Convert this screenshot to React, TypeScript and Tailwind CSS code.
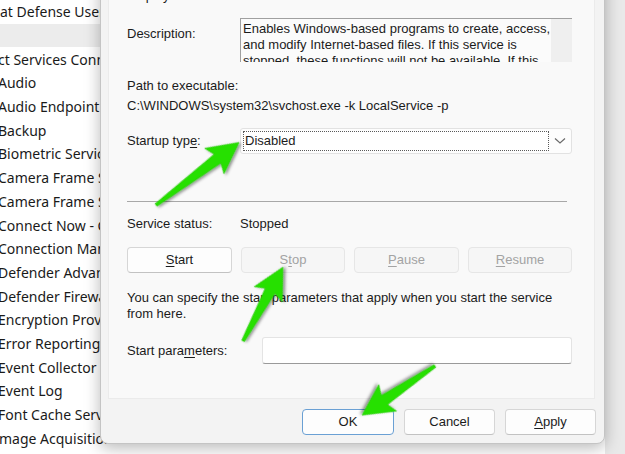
import React from "react";

const services = [
  { name: "at Defense User Service", shift: "" },
  { name: "", shift: "" },
  { name: "ct Services Connection Manager", shift: "-ml-[2px]" },
  { name: "Audio", shift: "-ml-[2px]" },
  { name: "Audio Endpoint Builder", shift: "-ml-[2px]" },
  { name: "Backup", shift: "-ml-[2px]" },
  { name: "Biometric Service", shift: "-ml-[2px]" },
  { name: "Camera Frame Server", shift: "-ml-[2px]" },
  { name: "Camera Frame Server Monitor", shift: "-ml-[2px]" },
  { name: "Connect Now - Config Registrar", shift: "-ml-[2px]" },
  { name: "Connection Manager", shift: "-ml-[2px]" },
  { name: "Defender Advanced Threat Protection", shift: "-ml-[2px]" },
  { name: "Defender Firewall", shift: "-ml-[2px]" },
  { name: "Encryption Provider Host Service", shift: "-ml-[2px]" },
  { name: "Error Reporting Service", shift: "-ml-[2px]" },
  { name: "Event Collector", shift: "-ml-[2px]" },
  { name: "Event Log", shift: "-ml-[2px]" },
  { name: "Font Cache Service", shift: "-ml-[2px]" },
  { name: "mage Acquisition", shift: "-ml-[1px]" },
];

// green callout arrow, drawn along the x axis then rotated into place
const Arrow = ({ x, y, len, angle }: { x: number; y: number; len: number; angle: number }) => {
  const H = 27;
  const hw = 16;
  const t0 = 1.5;
  const t1 = 5.5;
  const pts = [
    [0, -t0],
    [len - H, -t1],
    [len - H - 4, -hw],
    [len, 0],
    [len - H - 4, hw],
    [len - H, t1],
    [0, t0],
  ]
    .map((p) => p.join(","))
    .join(" ");
  return (
    <g transform={`translate(${x} ${y}) rotate(${angle})`} filter="url(#arrowShadow)">
      <polygon points={pts} fill="#27e000" stroke="#1fc400" strokeWidth="0.5" strokeLinejoin="round" />
    </g>
  );
};

const WinButton = ({
  children,
  disabled,
  primary,
  className = "",
}: {
  children: React.ReactNode;
  disabled?: boolean;
  primary?: boolean;
  className?: string;
}) => (
  <div
    className={`h-[26px] flex items-center justify-center rounded-[4px] border text-[13px] ${
      disabled
        ? "bg-[#f6f6f6] border-[#e6e6e6] text-[#a3a3a3]"
        : primary
        ? "bg-[#fdfdfd] border-[#6aa0d4] text-[#1b1b1b]"
        : "bg-[#fdfdfd] border-[#d6d6d6] border-b-[#c2c2c2] text-[#1b1b1b]"
    } ${className}`}
  >
    {children}
  </div>
);

export default function App() {
  return (
    <div className="relative w-[625px] h-[454px] overflow-hidden bg-white flex">
      {/* services list behind the dialog */}
      <div className="flex-1 flex flex-col font-['Noto_Sans',sans-serif] text-[14px] text-[#1a1a1a]">
        {services.map((s, i) => (
          <div
            key={i}
            className={`h-[23.7px] flex items-center whitespace-nowrap overflow-hidden ${
              i === 1 ? "bg-[#ececec]" : ""
            }`}
          >
            <span className={s.shift}>{s.name}</span>
          </div>
        ))}
      </div>
      <div className="w-[20px] bg-[#e9e9e9]" />

      {/* properties dialog */}
      <div className="absolute left-[100px] top-[-30px] w-[505px] h-[474px] bg-[#f3f3f3] border border-[#c4c4c4] rounded-b-[8px] shadow-[0_4px_16px_rgba(0,0,0,0.28)] flex flex-col font-['Liberation_Sans',Arial,sans-serif] text-[13px] text-[#1b1b1b]">
        <div className="ml-[7px] mr-[9px] h-[428px] bg-[#f9f9f9] border-x border-b border-[#ebebeb] flex flex-col pl-[18px] pr-[22px]">
          <div className="mt-[17px] h-[16px] leading-[16px]">Display name:</div>

          <div className="mt-[14px] flex h-[44px]">
            <div className="w-[113px] mt-[8px] leading-[16px]">Description:</div>
            <div className="flex-1 flex border-t border-l border-[#a0a0a0] bg-[#fbfbfb] overflow-hidden">
              <div className="flex-1 pl-[2px] pt-[2px] leading-[16px] whitespace-nowrap overflow-hidden">
                <div>Enables Windows-based programs to create, access,</div>
                <div>and modify Internet-based files. If this service is</div>
                <div>stopped, these functions will not be available. If this</div>
              </div>
              <div className="w-[21px] bg-[#efefef]" />
            </div>
          </div>

          <div className="mt-[16px] h-[16px] leading-[16px]">Path to executable:</div>
          <div className="mt-[4px] h-[16px] leading-[16px]">C:\WINDOWS\system32\svchost.exe -k LocalService -p</div>

          <div className="mt-[14px] flex items-center h-[26px]">
            <div className="w-[113px]">
              Startup typ<u className="underline-offset-2">e</u>:
            </div>
            <div className="flex-1 h-[26px] flex items-center bg-[#fdfdfd] border border-[#e2e2e2] rounded-[3px] pl-[2px]">
              <div className="w-[306px] h-[20px] flex items-center pl-[1px] border border-dotted border-[#5a5a5a] bg-white">
                Disabled
              </div>
              <div className="flex-1 flex justify-center">
                <svg width="12" height="8" viewBox="0 0 12 8">
                  <path d="M1 1.5 L6 6 L11 1.5" fill="none" stroke="#6a6a6a" strokeWidth="1.2" />
                </svg>
              </div>
            </div>
          </div>

          <div className="mt-[47px] h-px bg-[#a8a8a8] mr-[5px]" />

          <div className="mt-[14px] flex h-[16px] leading-[16px]">
            <div className="w-[113px]">Service status:</div>
            <div>Stopped</div>
          </div>

          <div className="mt-[15px] flex justify-between">
            <WinButton className="w-[105px]">
              <u className="underline-offset-2">S</u>tart
            </WinButton>
            <WinButton disabled className="w-[104px]">
              S<u className="underline-offset-2">t</u>op
            </WinButton>
            <WinButton disabled className="w-[105px]">
              <u className="underline-offset-2">P</u>ause
            </WinButton>
            <WinButton disabled className="w-[104px]">
              <u className="underline-offset-2">R</u>esume
            </WinButton>
          </div>

          <div className="mt-[17px] leading-[16px] whitespace-nowrap">
            You can specify the start parameters that apply when you start the service
            <br />
            from here.
          </div>

          <div className="mt-[15px] flex items-center h-[27px]">
            <div className="w-[135px]">
              Start para<u className="underline-offset-2">m</u>eters:
            </div>
            <div className="flex-1 h-[27px] bg-white border border-[#e4e4e4] border-b-[#9a9a9a] rounded-[3px]" />
          </div>
        </div>

        <div className="flex-1 flex justify-end items-start gap-[10px] pt-[10px] pr-[8px]">
          <WinButton primary className="w-[92px]">
            OK
          </WinButton>
          <WinButton className="w-[91px]">Cancel</WinButton>
          <WinButton className="w-[91px]">
            <u className="underline-offset-2">A</u>pply
          </WinButton>
        </div>
      </div>

      {/* green callout arrows */}
      <svg className="absolute inset-0 pointer-events-none" width="625" height="454">
        <defs>
          <filter id="arrowShadow" x="-30%" y="-30%" width="160%" height="160%">
            <feDropShadow dx="1" dy="2" stdDeviation="1.5" floodColor="#000" floodOpacity="0.45" />
          </filter>
        </defs>
        <Arrow x={156} y={205} len={104} angle={-37} />
        <Arrow x={243} y={341} len={84} angle={-61.6} />
        <Arrow x={435} y={366} len={88} angle={146} />
      </svg>
    </div>
  );
}
